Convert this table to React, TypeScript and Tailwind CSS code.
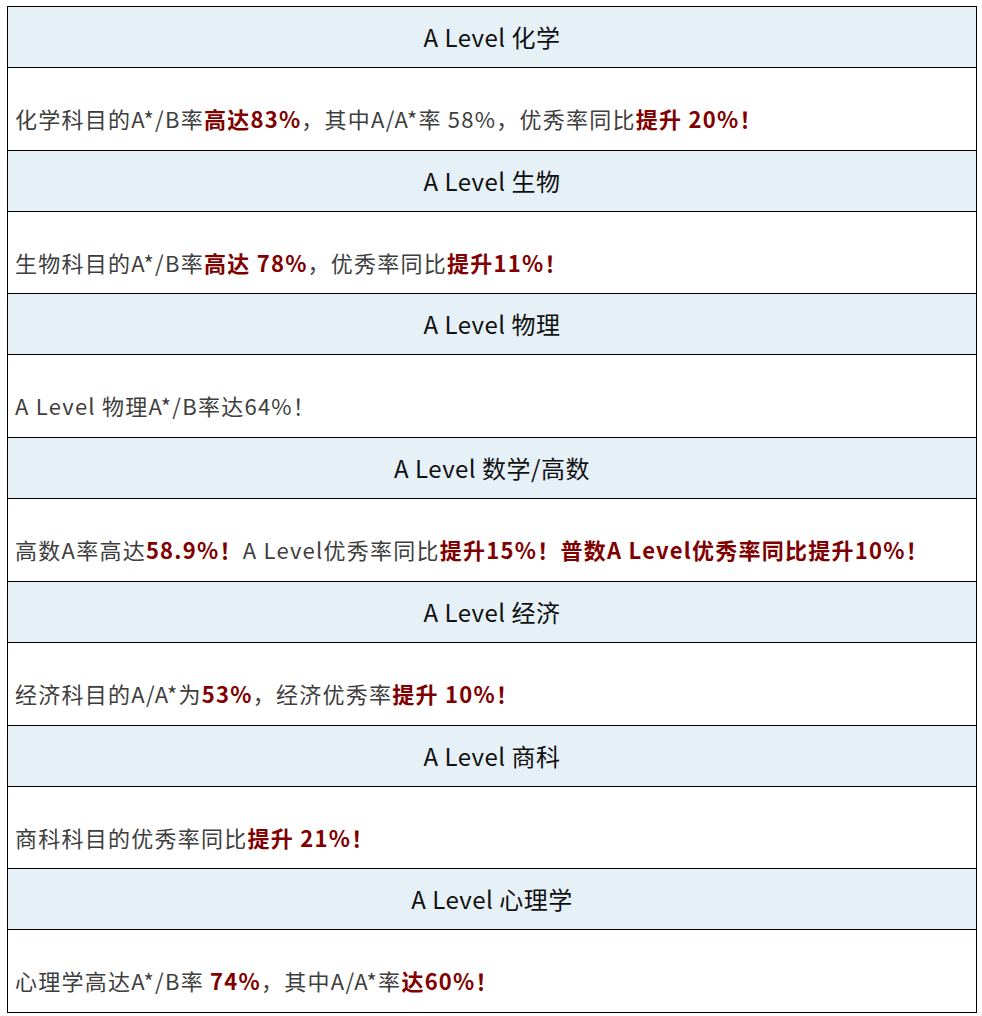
import React from "react";

type Seg = { t: string; b?: boolean };
const rows: { title: string; h: string; segs: Seg[] }[] = [
  {
    title: "A Level 化学",
    h: "h-[83px] border-b",
    segs: [
      { t: "化学科目的A*/B率" },
      { t: "高达83%", b: true },
      { t: "，其中A/A*率 58%，优秀率同比" },
      { t: "提升 20%！", b: true },
    ],
  },
  {
    title: "A Level 生物",
    h: "h-[82px] border-b",
    segs: [
      { t: "生物科目的A*/B率" },
      { t: "高达 78%", b: true },
      { t: "，优秀率同比" },
      { t: "提升11%！", b: true },
    ],
  },
  {
    title: "A Level 物理",
    h: "h-[83px] border-b",
    segs: [{ t: "A Level 物理A*/B率达64%！" }],
  },
  {
    title: "A Level 数学/高数",
    h: "h-[83px] border-b",
    segs: [
      { t: "高数A率高达" },
      { t: "58.9%！", b: true },
      { t: "A Level优秀率同比" },
      { t: "提升15%！普数A Level优秀率同比提升10%！", b: true },
    ],
  },
  {
    title: "A Level 经济",
    h: "h-[83px] border-b",
    segs: [
      { t: "经济科目的A/A*为" },
      { t: "53%", b: true },
      { t: "，经济优秀率" },
      { t: "提升 10%！", b: true },
    ],
  },
  {
    title: "A Level 商科",
    h: "h-[82px] border-b",
    segs: [{ t: "商科科目的优秀率同比" }, { t: "提升 21%！", b: true }],
  },
  {
    title: "A Level 心理学",
    h: "h-[82px]",
    segs: [
      { t: "心理学高达A*/B率 " },
      { t: "74%", b: true },
      { t: "，其中A/A*率" },
      { t: "达60%！", b: true },
    ],
  },
];

export default function App() {
  return (
    <div
      className="min-h-[1016px] w-[982px] bg-white pt-[6px] pl-[7px]"
      style={{ fontFamily: '"Noto Sans CJK SC", "Noto Sans", sans-serif' }}
    >
      <div className="w-[970px] border border-black flex flex-col">
        {rows.map((r, i) => (
          <React.Fragment key={i}>
            <div className="h-[61px] border-b border-black bg-[#e6f0f7] flex items-center justify-center text-[24px] tracking-[0.5px] text-[#111111]">
              {r.title}
            </div>
            <div
              className={`${r.h} border-black pl-[7px] pt-[34px] text-[22px] leading-[33px] tracking-[1.25px] text-[#3e3e3e] whitespace-nowrap`}
            >
              {r.segs.map((s, j) =>
                s.b ? (
                  <span key={j} className="font-bold text-[#800000]">
                    {s.t}
                  </span>
                ) : (
                  <span key={j}>{s.t}</span>
                )
              )}
            </div>
          </React.Fragment>
        ))}
      </div>
    </div>
  );
}
